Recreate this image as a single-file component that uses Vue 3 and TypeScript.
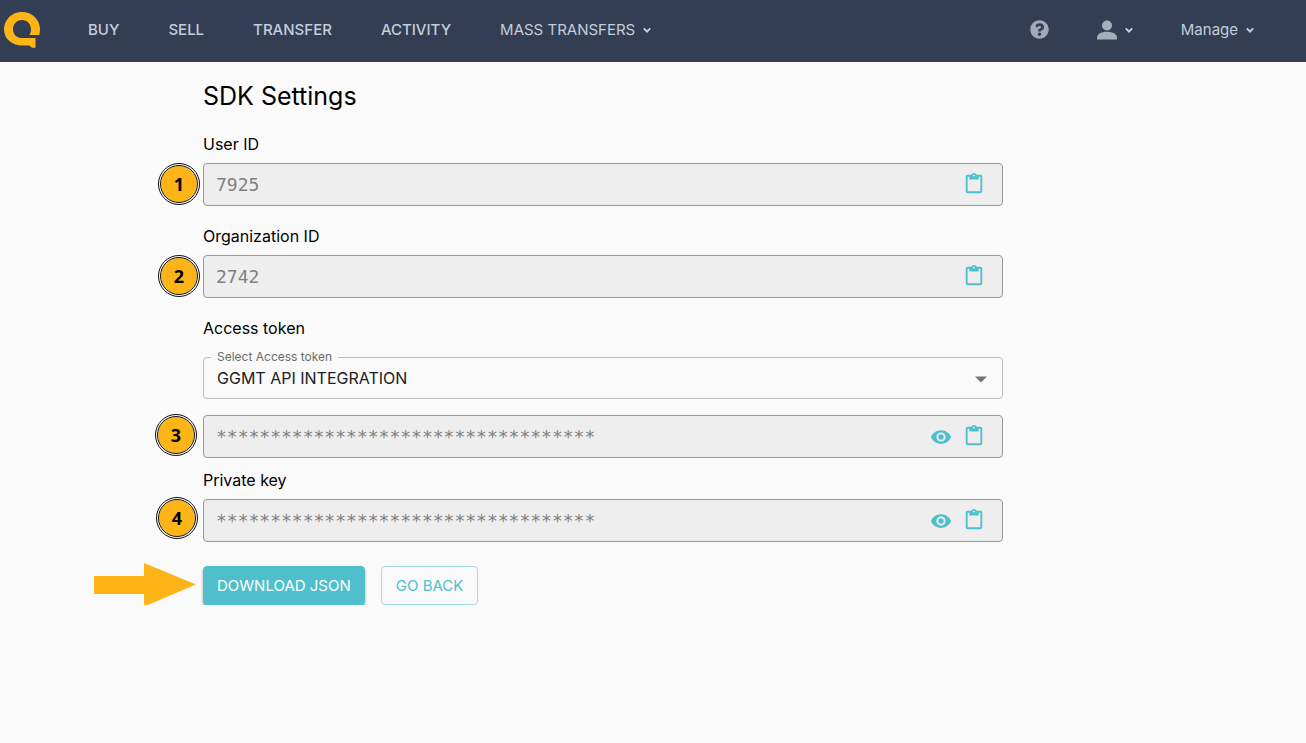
<script setup lang="ts">
import { ref } from 'vue'

interface Field {
  id: string
  label: string
  value: string
  step: number
  secret: boolean
}

const links = ['BUY', 'SELL', 'TRANSFER', 'ACTIVITY']
const mask = '*'.repeat(35)
const ids: Field[] = [
  { id: 'user-id', label: 'User ID', value: '7925', step: 1, secret: false },
  { id: 'organization-id', label: 'Organization ID', value: '2742', step: 2, secret: false },
]
const secrets: Field[] = [
  { id: 'access-token', label: 'Access token', value: mask, step: 3, secret: true },
  { id: 'private-key', label: 'Private key', value: mask, step: 4, secret: true },
]
const token = ref('GGMT API INTEGRATION')
</script>

<template>
  <header class="bar">
    <a class="logo" href="#" aria-label="Home">
      <svg width="37" height="37" viewBox="0 0 37 37">
        <path
          fill="#fcb416"
          d="M18 0C28.200 0 36 7.800 36 17.300c0 2-.2 4-.8 5.700H25.300c1.100-1.700 1.700-3.600 1.700-5.600C27 12 23.200 8 18 8s-9 4.100-9 9.200C9 22.600 13 26 18.500 26h13v9.800h-3.400L25 33.500h-6.500C7.300 33.500 0 26.500 0 17.300 0 7.800 7.800 0 18 0z"
        />
      </svg>
    </a>
    <nav class="nav">
      <a v-for="link in links" :key="link" class="strong" href="#">{{ link }}</a>
      <button class="menu" type="button">
        MASS TRANSFERS
        <svg width="8" height="7" viewBox="0 0 8 7"><path d="M.8 1.400l3.200 3.200 3.200-3.200" /></svg>
      </button>
    </nav>
    <div class="tools">
      <button class="menu help" type="button" aria-label="Help">
        <svg class="solid" width="19" height="19" viewBox="0 0 512 512">
          <path
            d="M504 256c0 137-111 248-248 248S8 393 8 256C8 119.100 119 8 256 8s248 111.100 248 248zM262.700 90c-54.500 0-89.300 23-116.500 63.800-3.500 5.300-2.400 12.400 2.700 16.300l34.700 26.300c5.200 3.900 12.600 3 16.700-2.100 17.900-22.700 30.100-35.800 57.300-35.800 20.400 0 45.700 13.100 45.700 33 0 15-12.400 22.700-32.500 34C247.100 238.500 216 254.900 216 296v4c0 6.600 5.400 12 12 12h56c6.600 0 12-5.400 12-12v-1.300c0-28.500 83.200-29.600 83.200-106.700 0-58-60.200-102-116.500-102zM256 338c-25.400 0-46 20.600-46 46s20.600 46 46 46 46-20.600 46-46-20.600-46-46-46z"
          />
        </svg>
      </button>
      <button class="menu" type="button" aria-label="Account">
        <svg class="solid" width="20" height="20" viewBox="0 0 20 20">
          <circle cx="10" cy="5.500" r="5" />
          <path d="M0 19.500v-1.700C0 14 4.200 11.800 10 11.800S20 14 20 17.800v1.700z" />
        </svg>
        <svg width="8" height="7" viewBox="0 0 8 7"><path d="M.8 1.400l3.200 3.200 3.200-3.200" /></svg>
      </button>
      <button class="menu" type="button">
        Manage
        <svg width="8" height="7" viewBox="0 0 8 7"><path d="M.8 1.400l3.200 3.200 3.200-3.200" /></svg>
      </button>
    </div>
  </header>

  <main class="page">
    <h1>SDK Settings</h1>

    <section v-for="field in [...ids, ...secrets]" :key="field.id" class="group" :class="{ secret: field.secret }">
      <label :for="field.id">{{ field.label }}</label>

      <div v-if="field.id === 'access-token'" class="select">
        <label for="token-name">Select Access token</label>
        <select id="token-name" v-model="token">
          <option>GGMT API INTEGRATION</option>
        </select>
        <svg class="arrow" width="24" height="24" viewBox="0 0 24 24"><path d="M6 9.500l6 6 6-6z" /></svg>
      </div>

      <div class="field">
        <span class="step" :class="'step-' + field.step">{{ field.step }}</span>
        <input :id="field.id" type="text" :value="field.value" disabled />
        <button v-if="field.secret" type="button" :aria-label="'Show ' + field.label">
          <svg width="22" height="22" viewBox="0 0 24 24">
            <path
              d="M12 4.500C7 4.500 2.730 7.610 1 12c1.730 4.390 6 7.500 11 7.500s9.270-3.110 11-7.500c-1.730-4.390-6-7.500-11-7.500zM12 17c-2.760 0-5-2.240-5-5s2.240-5 5-5 5 2.240 5 5-2.240 5-5 5zm0-8c-1.660 0-3 1.340-3 3s1.340 3 3 3 3-1.340 3-3-1.340-3-3-3z"
            />
          </svg>
        </button>
        <button class="copy" type="button" :aria-label="'Copy ' + field.label">
          <svg width="22" height="22" viewBox="0 0 24 24">
            <path
              d="M19 2h-4.180C14.400.840 13.300 0 12 0c-1.300 0-2.400.840-2.820 2H5c-1.100 0-2 .9-2 2v16c0 1.100.9 2 2 2h14c1.100 0 2-.9 2-2V4c0-1.100-.9-2-2-2zm-7 0c.55 0 1 .450 1 1s-.45 1-1 1-1-.45-1-1 .45-1 1-1zm7 18H5V4h2v3h10V4h2v16z"
            />
          </svg>
        </button>
      </div>
    </section>

    <div class="actions">
      <svg class="pointer" width="102" height="44" viewBox="0 0 102 44">
        <path d="M0 13h50V0l52 21.500L50 43.500V31H0z" />
      </svg>
      <button class="primary" type="button">DOWNLOAD JSON</button>
      <button class="outline" type="button">GO BACK</button>
    </div>
  </main>
</template>

<style>
body {
  margin: 0;
  background: #fafafa;
}
</style>

<style scoped>
* {
  box-sizing: border-box;
}

button,
select,
input {
  font: inherit;
}

button {
  cursor: pointer;
}

.bar,
.page {
  font-family: Inter, 'Liberation Sans', sans-serif;
}

.bar {
  display: flex;
  align-items: center;
  height: 62px;
  padding: 0 52px 2px 4px;
  background: #333d54;
  font-size: 15px;
  line-height: 20px;
}

.logo {
  display: flex;
  width: 84px;
}

.nav,
.tools {
  display: flex;
  align-items: center;
  gap: 49px;
}

.tools {
  gap: 48px;
  margin-left: auto;
}

.nav a,
.menu {
  color: #c3cfd9;
  text-decoration: none;
}

.nav .strong {
  font-weight: 500;
}

.menu {
  display: flex;
  align-items: center;
  gap: 8px;
  padding: 0;
  border: 0;
  background: none;
}

.menu path {
  fill: none;
  stroke: #c3cfd9;
  stroke-width: 2;
}

.menu .solid {
  fill: #a3b0bc;
}

.menu .solid path {
  fill: inherit;
  stroke: none;
}

.menu.help {
  padding-bottom: 1px;
}

.menu.help .solid {
  fill: #a3a8bd;
}

.page {
  max-width: 900px;
  margin: 0 auto;
  padding: 16px 100px 0 0;
  color: #000;
}

h1 {
  margin: 0 0 16px;
  font-size: 25px;
  line-height: 36px;
  font-weight: 400;
}

.group {
  margin-bottom: 16px;
}

.group.secret {
  margin-bottom: 8px;
}

.group > label {
  display: block;
  margin-bottom: 5px;
  font-size: 16px;
  line-height: 28px;
}

.field {
  position: relative;
  display: flex;
  align-items: center;
  gap: 11px;
  height: 43px;
  padding: 0 17px 0 12px;
  border: 1px solid #9a9a9a;
  border-radius: 4px;
  background: #eee;
}

.field input {
  flex: 1;
  min-width: 0;
  padding: 0;
  border: 0;
  background: none;
  color: #808080;
  font-family: 'DejaVu Sans Mono', monospace;
  font-size: 18px;
  line-height: 24px;
}

.field button {
  display: flex;
  padding: 0;
  border: 0;
  background: none;
}

.field .copy {
  padding-bottom: 2px;
}

.field button svg {
  fill: #4ebfcb;
}

.step {
  position: absolute;
  top: -1px;
  left: -46px;
  width: 42px;
  height: 42px;
  border: 3px double #111;
  border-radius: 50%;
  background: #fcb416;
  background-clip: padding-box;
  font-family: 'Noto Sans', sans-serif;
  font-size: 18px;
  font-weight: 700;
  line-height: 36px;
  text-align: center;
}

.step-3 {
  top: -2px;
  left: -49px;
}

.step-4 {
  top: -3px;
  left: -48px;
}

.select {
  position: relative;
  margin: 15px 0 16px;
}

.select label {
  position: absolute;
  top: -9px;
  left: 8px;
  padding: 0 6px;
  background: #fafafa;
  color: #6b6b6b;
  font-size: 12px;
  line-height: 18px;
}

.select select {
  display: block;
  width: 100%;
  height: 42px;
  padding: 0 40px 0 13px;
  border: 1px solid #bdbdbd;
  border-radius: 4px;
  background: transparent;
  color: #212121;
  font-size: 16px;
  appearance: none;
}

.arrow {
  position: absolute;
  top: 10px;
  right: 10px;
  fill: #757575;
  pointer-events: none;
}

.actions {
  position: relative;
  display: flex;
  gap: 16px;
  margin-top: 24px;
}

.pointer {
  position: absolute;
  top: -3px;
  left: -109px;
  fill: #fcb416;
}

.primary,
.outline {
  height: 39px;
  padding: 0 13px;
  border: 1px solid #4ebfcb;
  border-radius: 4px;
  background: #4ebfcb;
  color: #fff;
  font-size: 15px;
}

.primary {
  box-shadow: 0 2px 3px rgba(0, 0, 0, 0.35);
}

.outline {
  padding: 0 14px;
  border-color: #a2dde3;
  background: transparent;
  color: #4ebfcb;
}
</style>
